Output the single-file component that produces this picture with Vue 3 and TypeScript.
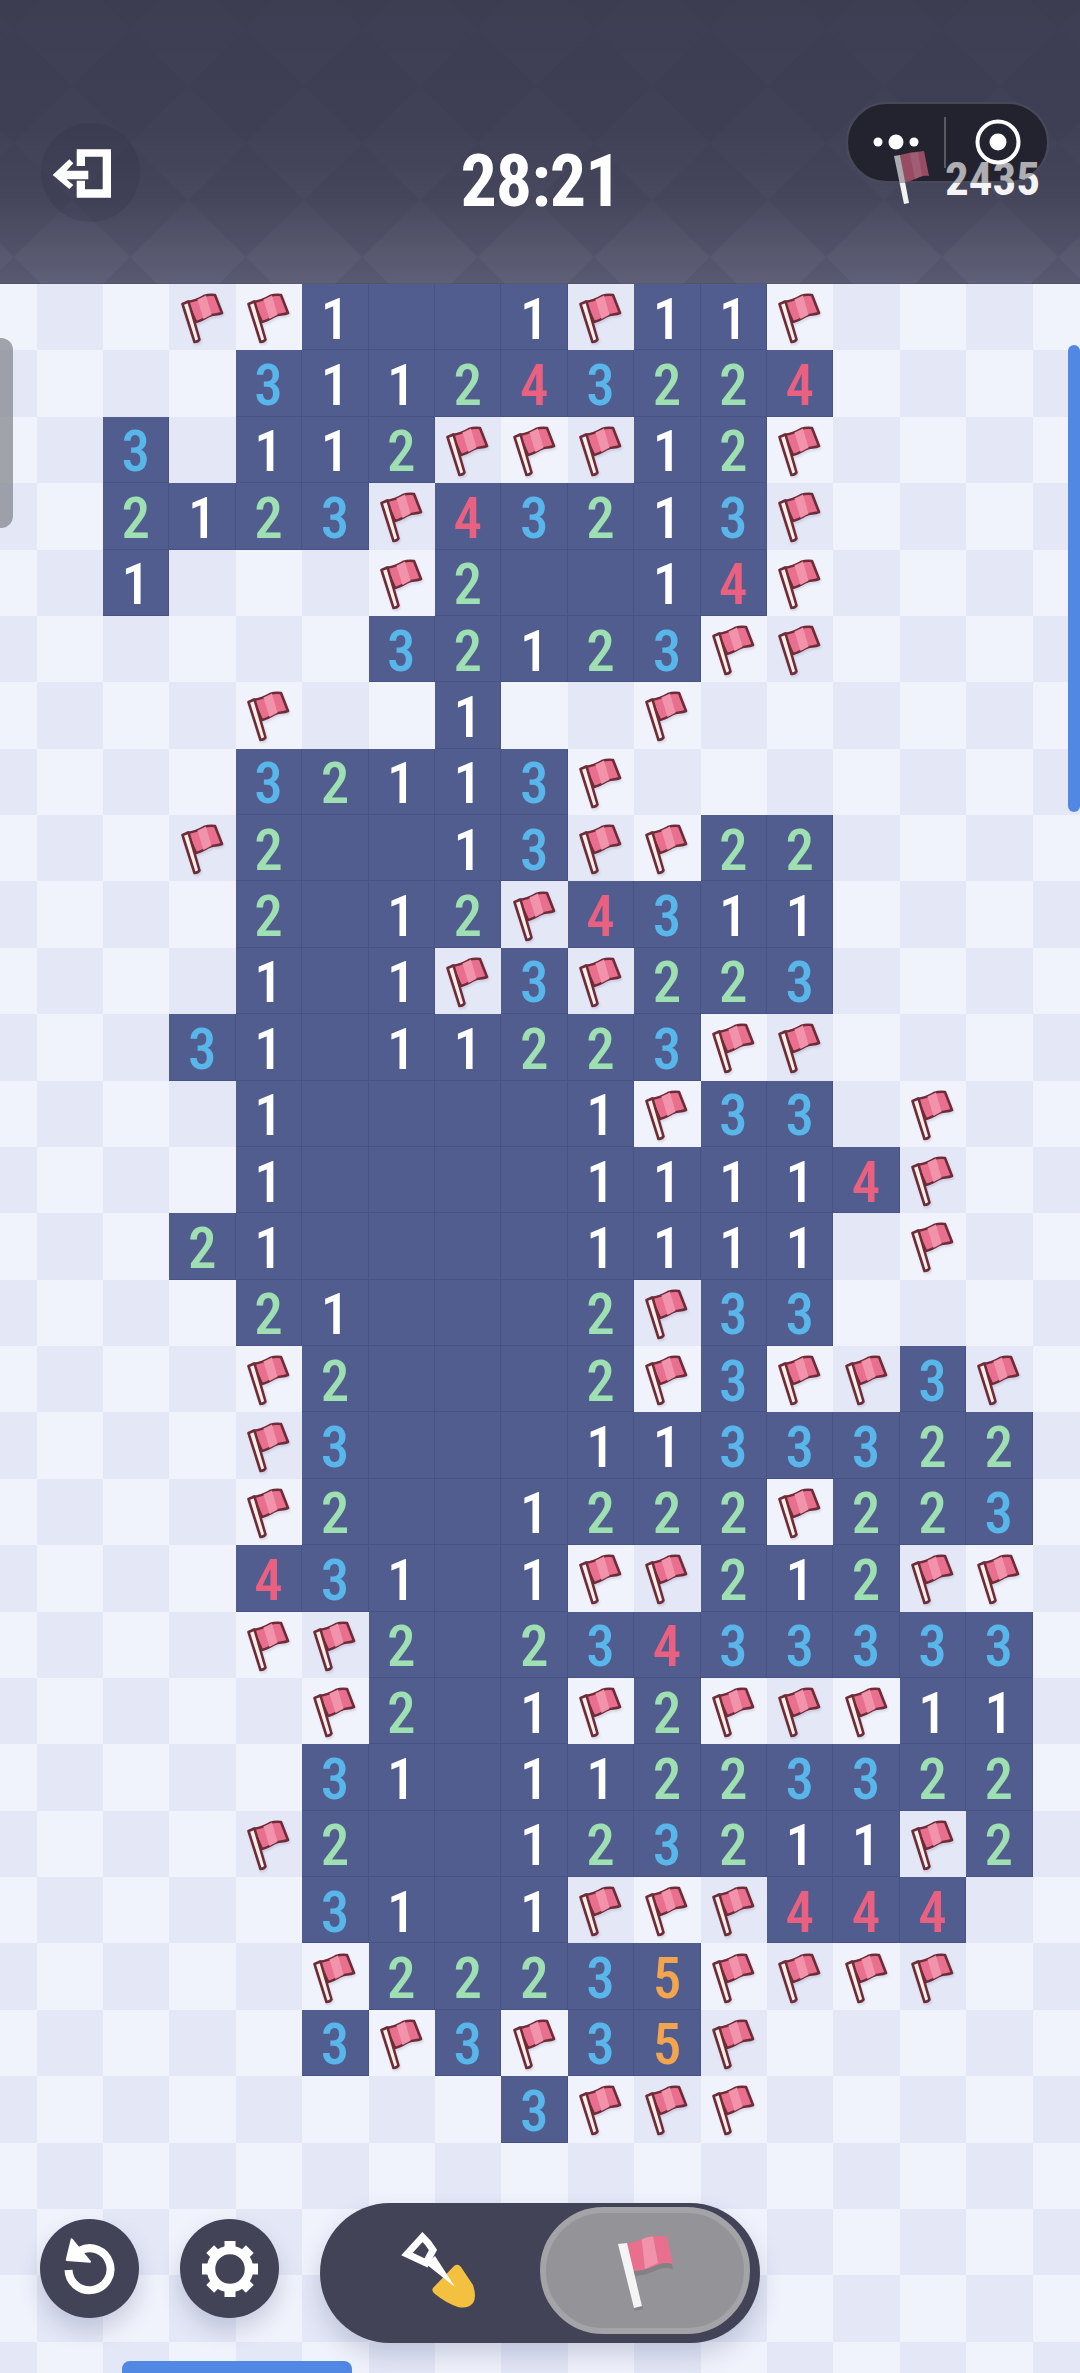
<script setup lang="ts">
const rows: string[] = [
  '...FF1__1F11F....',
  '....311243224....',
  '..3.112FFF12F....',
  '..2123F43213F....',
  '..1...F2__14F....',
  '......32123FF....',
  '....F..1..F......',
  '....32113F.......',
  '...F2__13FF22....',
  '....2_12F4311....',
  '....1_1F3F223....',
  '...31_11223FF....',
  '....1____1F33.F..',
  '....1____11114F..',
  '...21____1111.F..',
  '....21___2F33....',
  '....F2___2F3FF3F.',
  '....F3___1133322.',
  '....F2__1222F223.',
  '....431_1FF212FF.',
  '....FF2_23433333.',
  '.....F2_1F2FFF11.',
  '.....31_11223322.',
  '....F2__123211F2.',
  '.....31_1FFF444..',
  '.....F22235FFFF..',
  '.....3F3F35F.....',
  '........3FFF.....',
  '.................',
  '.................',
  '.................',
  '.................'
]

interface Cell {
  key: string
  value: string
  open: boolean
  dark: boolean
}

const cells: Cell[] = rows.flatMap((row, r) =>
  row.split('').map((value, c) => ({
    key: `${r}-${c}`,
    value,
    open: value !== '.' && value !== 'F',
    dark: (r + c) % 2 === 1
  }))
)

const teeth: number[] = [0, 45, 90, 135, 180, 225, 270, 315]
</script>

<template>
  <div class="page">
    <header class="top">
      <svg class="argyle" width="1080" height="284" aria-hidden="true">
        <defs>
          <pattern id="argyle" width="116" height="114" patternUnits="userSpaceOnUse" patternTransform="translate(14 86)">
            <polygon points="58,0 116,57 58,114 0,57" fill="#ffffff" fill-opacity="0.028" />
            <polygon points="0,0 58,0 0,57" fill="#000000" fill-opacity="0.02" />
            <polygon points="116,0 116,57 58,0" fill="#000000" fill-opacity="0.02" />
            <polygon points="0,114 0,57 58,114" fill="#000000" fill-opacity="0.02" />
            <polygon points="116,114 58,114 116,57" fill="#000000" fill-opacity="0.02" />
          </pattern>
          <linearGradient id="fade" x1="0" y1="0" x2="0" y2="1">
            <stop offset="0" stop-color="#fff" stop-opacity="0.15" />
            <stop offset="0.6" stop-color="#fff" stop-opacity="0.35" />
            <stop offset="1" stop-color="#fff" stop-opacity="1" />
          </linearGradient>
          <mask id="argyle-mask">
            <rect width="1080" height="284" fill="url(#fade)" />
          </mask>
        </defs>
        <rect width="1080" height="284" fill="url(#argyle)" mask="url(#argyle-mask)" />
      </svg>

      <button class="back" type="button" aria-label="Exit">
        <svg width="99" height="99" viewBox="0 0 99 99">
          <path d="M35.7 26.3H70V74.7H35.7V57.7H44V66.3H61.7V33.7H44V43H35.7Z" fill="#fff" />
          <path d="M11.7 52 28.3 36.3 32.3 40.3 25.5 47.7H47.3V56.3H25.5L32.3 62 28.3 66Z" fill="#fff" />
        </svg>
      </button>

      <div class="timer">28:21</div>

      <div class="capsule capsule-base"></div>

      <div class="count">
        <svg class="count-flag" width="40" height="54" viewBox="0 0 40 54">
          <path d="M9 4 C15 3 19 1 25 1 L33 0 L38 25 C32 24 28 26 24 28 C20 30 16 31 13 31Z" fill="#d3627f" />
          <path d="M19 3 L27 1 L31 25 L24 28Z" fill="#e07d96" />
          <path d="M3 5 L9 4 L18 52 L13 53Z" fill="#f3f3f3" />
        </svg>
        <span>2435</span>
      </div>

      <div class="capsule capsule-veil"></div>
      <div class="capsule-content">
        <svg width="203" height="81" viewBox="0 0 203 81">
          <circle cx="32" cy="40" r="4.5" fill="#fff" />
          <circle cx="50" cy="40" r="7.5" fill="#fff" />
          <circle cx="68" cy="40" r="4.5" fill="#fff" />
          <line x1="99" y1="15" x2="99" y2="66" stroke="#fff" stroke-opacity="0.25" stroke-width="2" />
          <circle cx="152" cy="40" r="20.5" fill="none" stroke="#fff" stroke-width="4" />
          <circle cx="152" cy="40" r="8.5" fill="#fff" />
        </svg>
      </div>
    </header>

    <main class="board">
      <div
        v-for="cell in cells"
        :key="cell.key"
        class="cell"
        :class="[cell.open ? 'open' : cell.dark ? 'dark' : 'light', cell.open && cell.value !== '_' ? `n${cell.value}` : '']"
      >
        <svg v-if="cell.value === 'F'" class="flag" width="66" height="66" viewBox="0 0 66 66">
          <path d="M17 18C24 17 29 15 34 12C38 10.5 42 10.5 45 11L52 29C47 31 43 30 39 32C34 35 30 37 26 38Z" fill="#e8708e" stroke="#6e2b38" stroke-width="2.6" stroke-linejoin="round" />
          <path d="M27.5 15.4L36 11.5L41.5 30.8L33.5 35Z" fill="#f193aa" />
          <path d="M12.5 20L18.5 17.5L29.5 55.5Q28 57.8 24.5 58Z" fill="#fdeee8" stroke="#6e2b38" stroke-width="2.6" stroke-linejoin="round" />
        </svg>
        <template v-else-if="cell.open && cell.value !== '_'">{{ cell.value }}</template>
      </div>
    </main>

    <div class="side-handle"></div>
    <div class="side-scroll"></div>
    <div class="home-bar"></div>

    <footer class="tools">
      <button class="round" type="button" aria-label="Undo">
        <svg width="99" height="99" viewBox="0 0 99 99">
          <path d="M28.5 51A21 21 0 1 0 40 31.5" fill="none" stroke="#fff" stroke-width="8" />
          <path d="M31.7 20.3 26.7 41 50 42.7Z" fill="#fff" stroke="#fff" stroke-width="2" stroke-linejoin="round" />
        </svg>
      </button>
      <button class="round" type="button" aria-label="Settings">
        <svg width="99" height="99" viewBox="0 0 99 99">
          <circle cx="50" cy="50" r="19" fill="none" stroke="#fff" stroke-width="8.5" />
          <rect v-for="deg in teeth" :key="deg" x="44.5" y="22" width="11" height="10" fill="#fff" :transform="`rotate(${deg} 50 50)`" />
        </svg>
      </button>
      <div class="mode">
        <div class="mode-dig">
          <svg width="100" height="100" viewBox="0 0 100 100">
            <path d="M33 73L54 51Q58 48 61 52L73 70Q77 82 73 88Q68 94 58 92Q46 88 35 79Q31 76 33 73Z" fill="#f4c03f" />
            <path d="M22.5 22L7 39L26 48L33 35Q29 28 22.5 22Z" fill="none" stroke="#fff" stroke-width="7" />
            <path d="M26 49L35 41L55 72Z" fill="#fff" />
          </svg>
        </div>
        <div class="mode-flag">
          <svg width="70" height="90" viewBox="0 0 70 90">
            <path d="M8 18L17 17L32 80L24 82Z" fill="#000" fill-opacity="0.1" transform="translate(1 3)" />
            <path d="M17 18L33 13C38 10 47 9 57 11L63 38C56 36 50 37 45 40C38 43 30 45 23 45Z" fill="#000" fill-opacity="0.12" transform="translate(0 5)" />
            <path d="M17 18L33 13C38 10 47 9 57 11L63 38C56 36 50 37 45 40C38 43 30 45 23 45Z" fill="#e8708e" />
            <path d="M31.7 13.6C36 11 39 10.7 43 10.5L48 37C44 39 39 41 35 43Z" fill="#f193aa" />
            <path d="M8 18L17 17L32 80L24 82Z" fill="#f4f4f4" />
          </svg>
        </div>
      </div>
    </footer>
  </div>
</template>

<style scoped>
.page {
  position: relative;
  width: 1080px;
  height: 2373px;
  overflow: hidden;
  background: #f0f3fc;
  font-family: Roboto, "Liberation Sans", sans-serif;
  font-stretch: 75%;
}

.top {
  position: relative;
  height: 284px;
  box-sizing: border-box;
  padding: 123px 40px 0 41px;
  display: grid;
  grid-template-columns: 1fr auto 1fr;
  align-items: start;
  background: linear-gradient(180deg, #3d3e52 0%, #3f4056 45%, #46475d 70%, #5b5c74 100%);
  border-bottom: 1px solid #54556a;
}

.argyle {
  position: absolute;
  left: 0;
  top: 0;
}

.back {
  position: relative;
  width: 99px;
  height: 99px;
  padding: 0;
  border: 0;
  border-radius: 50%;
  background: rgba(40, 40, 60, 0.16);
}

.back svg,
.round svg {
  display: block;
}

.timer {
  position: relative;
  margin-top: 23px;
  font-size: 72px;
  line-height: 72px;
  font-weight: 700;
  letter-spacing: -1px;
  color: #fff;
}

.count {
  position: relative;
  justify-self: end;
  margin-top: 28px;
  display: flex;
  align-items: flex-start;
  gap: 14px;
  color: #f4f4f6;
  font-size: 47px;
  line-height: 56px;
  font-weight: 700;
}

.count-flag {
  display: block;
}

.capsule {
  position: absolute;
  left: 846px;
  top: 102px;
  width: 203px;
  height: 81px;
  box-sizing: border-box;
  border-radius: 41px;
}

.capsule-base {
  background: #24242f;
  border: 2px solid #5c5d6e;
}

.capsule-veil {
  background: rgba(36, 36, 47, 0.34);
}

.capsule-content {
  position: absolute;
  left: 846px;
  top: 102px;
  width: 203px;
  height: 81px;
}

.capsule-content svg {
  display: block;
}

.board {
  margin-left: -29.7px;
  width: 1128.8px;
  display: grid;
  grid-template-columns: repeat(17, 66.4px);
  grid-auto-rows: 66.39px;
}

.cell {
  display: flex;
  align-items: center;
  justify-content: center;
  box-sizing: border-box;
  padding-top: 5px;
  font-size: 57px;
  font-weight: 500;
  font-stretch: 85%;
  line-height: 1;
}

.light {
  background: #f0f3fc;
}

.dark {
  background: #e3e7f6;
}

.open {
  background: #515d8e;
  border-right: 1px solid #485385;
  border-bottom: 1px solid #485385;
}

.n1 { color: #ffffff; }
.n2 { color: #9fe0b2; }
.n3 { color: #58b6ea; }
.n4 { color: #ea6080; }
.n5 { color: #f2a44e; }

.flag {
  display: block;
  margin-top: -5px;
  filter: drop-shadow(1px 2px 1px rgba(90, 90, 130, 0.18));
}

.side-handle {
  position: absolute;
  left: 0;
  top: 338px;
  width: 13px;
  height: 190px;
  border-radius: 0 12px 12px 0;
  background: rgba(130, 132, 140, 0.72);
}

.side-scroll {
  position: absolute;
  left: 1068px;
  top: 345px;
  width: 12px;
  height: 467px;
  border-radius: 6px;
  background: #5088e4;
}

.home-bar {
  position: absolute;
  left: 122px;
  top: 2361px;
  width: 230px;
  height: 12px;
  border-radius: 8px 8px 0 0;
  background: #5088e4;
}

.tools {
  position: absolute;
  left: 40px;
  top: 2203px;
  height: 140px;
  display: flex;
  align-items: flex-start;
  gap: 41px;
}

.round {
  width: 99px;
  height: 99px;
  margin-top: 16px;
  padding: 0;
  border: 0;
  border-radius: 50%;
  background: #424357;
  box-shadow: 0 12px 22px rgba(70, 74, 120, 0.22);
}

.mode {
  width: 440px;
  height: 140px;
  box-sizing: border-box;
  padding: 4px 10px 9px 0;
  display: flex;
  border-radius: 70px;
  background: #424357;
  box-shadow: 0 12px 24px rgba(70, 74, 120, 0.22);
}

.mode-dig {
  flex: 1;
  display: flex;
  align-items: flex-start;
  padding: 8px 0 0 80px;
}

.mode-flag {
  width: 210px;
  height: 127px;
  box-sizing: border-box;
  border-radius: 64px;
  background: #949498;
  border: 6px solid #a3a3a8;
  display: flex;
  align-items: center;
  justify-content: center;
}
</style>

<style>
html,
body {
  margin: 0;
  padding: 0;
}
</style>
